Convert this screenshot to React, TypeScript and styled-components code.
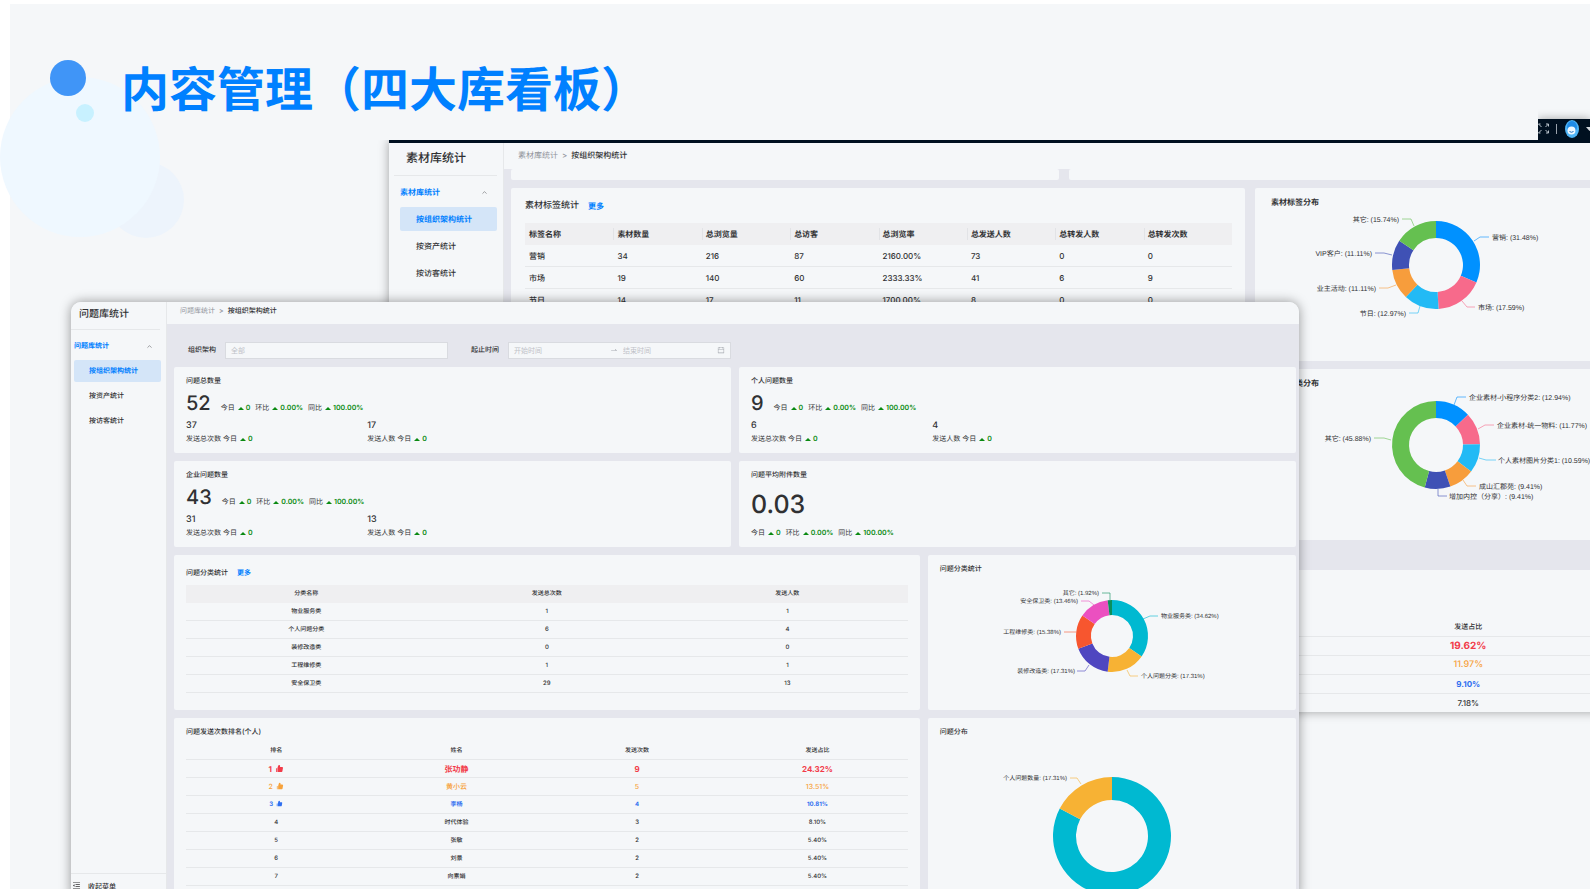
import React from "react";
import styled, { createGlobalStyle } from "styled-components";
import {
  AiFillLike,
  AiOutlineCalendar,
  AiOutlineMenuFold,
  AiOutlineSwapRight,
} from "react-icons/ai";
import { ChevronUp } from "lucide-react";

const color = {
  panel: "#f5f7f9",
  gutter: "#e5e6ed",
  line: "#e6e8ea",
  head: "#efeff1",
  text: "#303133",
  muted: "#909399",
  primary: "#0080ff",
  active: "#d4e5f8",
  up: "#0a8a12",
  navy: "#001020",
};

const GlobalStyle = createGlobalStyle`
  * { box-sizing: border-box; }
  body {
    margin: 0;
    background: #ffffff;
    color: ${color.text};
    font-family: Inter, "Noto Sans CJK SC", sans-serif;
    text-rendering: geometricPrecision;
    overflow: hidden;
  }
  h1, h2, p { margin: 0; font-weight: 500; }
  a { color: inherit; text-decoration: none; }
`;

/* ---------- slide ---------- */

const Slide = styled.div`
  position: relative;
  height: 100vh;
  overflow: hidden;
  padding: 4px 0 0 10px;
`;

const Sheet = styled.div`
  height: 100%;
  background: ${color.panel};
  padding: 54px 0 0 111px;
`;

const Bubbles = styled.svg`
  position: absolute;
  left: 0;
  top: 56px;
  width: 190px;
  height: 190px;
`;

const SlideTitle = styled.h1`
  position: relative;
  font-size: 48px;
  line-height: 64px;
  font-weight: 700;
  color: ${color.primary};
  white-space: nowrap;
`;

/* ---------- windows ---------- */

const BackWindow = styled.section`
  position: absolute;
  left: 389px;
  right: -35px;
  top: 140px;
  display: flex;
  border-top: 3px solid ${color.navy};
  background: ${color.panel};
  box-shadow: 0 0 10px rgba(0, 0, 0, 0.35);
  clip-path: inset(0 0 -24px -24px);
`;

const FrontWindow = styled.section`
  position: absolute;
  left: 71px;
  right: 291px;
  top: 302px;
  bottom: -8px;
  display: flex;
  overflow: hidden;
  border-radius: 10px 10px 0 0;
  background: ${color.panel};
`;

const FrontShadow = styled.div`
  position: absolute;
  left: 71px;
  right: 291px;
  top: 302px;
  bottom: -8px;
  border-radius: 10px 10px 0 0;
  box-shadow: 0 0 12px rgba(0, 0, 0, 0.4);
`;

const NavBar = styled.div`
  position: absolute;
  right: 0;
  top: 119px;
  width: 52px;
  height: 24px;
  background: ${color.navy};
  box-shadow: 0 0 10px rgba(0, 0, 0, 0.35);
  clip-path: inset(-12px 0 0 0);
`;

/* ---------- side menu ---------- */

const Side = styled.aside<{ $width: number }>`
  flex: none;
  width: ${(p) => p.$width}px;
  display: flex;
  flex-direction: column;
  border-right: 1px solid ${color.line};
`;

const SideTitle = styled.h2<{ $large?: boolean }>`
  margin: ${(p) => (p.$large ? "0 6px 0 5px" : "0 6px 0 0")};
  padding-left: ${(p) => (p.$large ? 12 : 8)}px;
  font-size: ${(p) => (p.$large ? 12 : 10)}px;
  line-height: ${(p) => (p.$large ? 30 : 24)}px;
  height: ${(p) => (p.$large ? 33 : 28)}px;
  border-bottom: 1px solid ${color.line};
`;

const Menu = styled.nav<{ $large?: boolean }>`
  display: flex;
  flex-direction: column;
  gap: 3px;
  padding: ${(p) => (p.$large ? "4px 6px 0 11px" : "5px 5px 0 3px")};
  font-size: ${(p) => (p.$large ? 8 : 7)}px;
  font-weight: 500;
`;

const MenuGroup = styled.div<{ $large?: boolean }>`
  display: flex;
  align-items: center;
  justify-content: space-between;
  height: ${(p) => (p.$large ? 24 : 22)}px;
  padding-right: ${(p) => (p.$large ? 9 : 8)}px;
  color: ${color.primary};
  font-weight: 700;
  svg { color: #606266; }
`;

const MenuItem = styled.a<{ $active?: boolean; $large?: boolean }>`
  height: ${(p) => (p.$large ? 24 : 22)}px;
  line-height: ${(p) => (p.$large ? 24 : 22)}px;
  padding-left: ${(p) => (p.$large ? 16 : 15)}px;
  border-radius: 2px;
  background: ${(p) => (p.$active ? color.active : "transparent")};
  color: ${(p) => (p.$active ? color.primary : color.text)};
  font-weight: ${(p) => (p.$active ? 700 : 500)};
`;

const Collapse = styled.button`
  display: flex;
  align-items: center;
  gap: 7px;
  height: 24px;
  margin-top: auto;
  padding: 0 0 0 1px;
  border: 0;
  border-top: 1px solid ${color.line};
  background: none;
  color: ${color.text};
  font: 500 7px Inter, "Noto Sans CJK SC", sans-serif;
`;

/* ---------- page parts ---------- */

const Main = styled.main`
  flex: 1;
  min-width: 0;
  display: flex;
  flex-direction: column;
`;

const Crumbs = styled.div<{ $large?: boolean }>`
  display: flex;
  gap: 4px;
  flex: none;
  height: ${(p) => (p.$large ? 26 : 22)}px;
  line-height: ${(p) => (p.$large ? 24 : 18)}px;
  padding-left: ${(p) => (p.$large ? 14 : 13)}px;
  font-size: ${(p) => (p.$large ? 8 : 7)}px;
  font-weight: 500;
  a { color: ${color.muted}; font-weight: 400; }
  span { color: ${color.muted}; }
`;

const Body = styled.div<{ $large?: boolean }>`
  flex: 1;
  display: flex;
  flex-direction: column;
  gap: 8px;
  padding: ${(p) => (p.$large ? "0 8px 0 7px" : "0 3px 0 7px")};
  background: ${color.gutter};
`;

const Row = styled.div<{ $cols: string; $gap?: number; $height?: number }>`
  display: grid;
  grid-template-columns: ${(p) => p.$cols};
  gap: ${(p) => p.$gap ?? 8}px;
  ${(p) => (p.$height ? `height: ${p.$height}px;` : "flex: 1; min-height: 0;")}
`;

const Card = styled.div<{ $pad?: string }>`
  min-width: 0;
  overflow: hidden;
  border-radius: 2px;
  background: ${color.panel};
  padding: ${(p) => p.$pad ?? "8px 12px 0"};
`;

const CardTitle = styled.h2<{ $size?: number; $bold?: boolean }>`
  display: flex;
  align-items: center;
  gap: 9px;
  font-size: ${(p) => p.$size ?? 7}px;
  line-height: 12px;
  font-weight: ${(p) => (p.$bold ? 700 : 500)};
  a { color: ${color.primary}; font-weight: 700; font-size: ${(p) => (p.$size ? 8 : 7)}px; }
`;

/* ---------- filters ---------- */

const Filters = styled.form`
  display: flex;
  align-items: center;
  gap: 23px;
  height: 35px;
  padding: 17px 0 0 14px;
`;

const Field = styled.div`
  display: flex;
  align-items: center;
  gap: 9px;
  font-size: 7px;
  font-weight: 500;
`;

const Box = styled.div`
  display: flex;
  align-items: center;
  width: 223px;
  height: 17px;
  padding: 0 5px;
  border: 1px solid #d9dbe0;
  background: ${color.panel};
  color: #a8abb2;
`;

const Input = styled.input<{ $grow?: boolean }>`
  flex: ${(p) => (p.$grow ? "1" : "none")};
  width: 96px;
  min-width: 0;
  padding: 0;
  border: 0;
  outline: 0;
  background: none;
  font: 400 7px Inter, "Noto Sans CJK SC", sans-serif;
  &::placeholder { color: #bfc2c8; opacity: 1; }
`;

const SmallIcon = styled.span<{ $gap?: number }>`
  display: flex;
  margin-right: ${(p) => p.$gap ?? 0}px;
`;

/* ---------- metrics ---------- */

const Headline = styled.div<{ $stacked?: boolean }>`
  display: flex;
  flex-direction: ${(p) => (p.$stacked ? "column" : "row")};
  align-items: baseline;
  gap: ${(p) => (p.$stacked ? 2 : 10)}px;
  padding-top: ${(p) => (p.$stacked ? 8 : 3)}px;
`;

const Figure = styled.strong<{ $size: number }>`
  font-size: ${(p) => p.$size}px;
  line-height: ${(p) => (p.$size > 22 ? 32 : 26)}px;
  font-weight: 500;
`;

const Trends = styled.div`
  display: flex;
  gap: 5px;
  font-size: 7px;
  line-height: 20px;
`;

const Trend = styled.span`
  display: inline-flex;
  align-items: center;
  gap: 3px;
  white-space: pre;
`;

const Rise = styled.b`
  display: inline-flex;
  align-items: center;
  gap: 2px;
  color: ${color.up};
  font-weight: 600;
  &::before {
    content: "";
    border: solid transparent;
    border-width: 0 3px 3px;
    border-bottom-color: ${color.up};
  }
`;

const SubMetrics = styled.div`
  display: grid;
  grid-template-columns: 34% 66%;
  padding-top: 2px;
  font-size: 7px;
  line-height: 14px;
  p { font-size: 9px; line-height: 12px; }
`;

/* ---------- tables ---------- */

const Table = styled.table<{ $row: number; $size: number; $left?: boolean; $top?: number }>`
  width: 100%;
  margin-top: ${(p) => p.$top ?? 0}px;
  table-layout: fixed;
  border-collapse: separate;
  border-spacing: 0;
  font-size: ${(p) => p.$size}px;
  line-height: 12px;
  text-align: ${(p) => (p.$left ? "left" : "center")};
  th, td {
    height: ${(p) => p.$row}px;
    padding: ${(p) => (p.$left ? "0 0 0 4px" : "0")};
    border-bottom: 1px solid ${color.line};
    font-weight: 500;
    white-space: nowrap;
  }
`;

const FilledHead = styled.thead<{ $height: number; $bold?: boolean }>`
  background: ${color.head};
  && th {
    height: ${(p) => p.$height}px;
    border-bottom: 0;
    font-weight: ${(p) => (p.$bold ? 700 : 500)};
  }
  && th + th {
    background: ${(p) =>
      p.$bold ? "linear-gradient(#e2e3e6, #e2e3e6) 0 50% / 1px 12px no-repeat" : "none"};
  }
`;

const medal = ["#f23c4a", "#f7a23b", "#2f6ff0"];

const RankRow = styled.tr<{ $rank: number; $base: number }>`
  && td {
    color: ${(p) => medal[p.$rank - 1] ?? color.text};
    font-size: ${(p) => Math.max(p.$base, p.$base + 3 - p.$rank)}px;
    font-weight: ${(p) => (p.$rank === 1 || p.$rank === 3 ? 700 : 500)};
  }
  svg { margin-left: 3px; vertical-align: -1px; }
`;

/* ---------- donut ---------- */

type Slice = {
  name: string;
  share: number;
  fill: string;
  line?: string;
  at?: [number, number];
};

const ChartBox = styled.div<{ $top: number }>`
  display: flex;
  justify-content: center;
  padding-top: ${(p) => p.$top}px;
  svg { flex: none; overflow: visible; }
  text {
    font-family: "Liberation Sans", "Noto Sans CJK SC", sans-serif;
    fill: ${color.text};
  }
`;

function Donut({ outer, inner, slices, font, top }: {
  outer: number; inner: number; slices: Slice[]; font: number; top: number;
}) {
  let from = 0;
  const point = (turn: number, r: number) =>
    `${(Math.sin(turn * 2 * Math.PI) * r).toFixed(2)} ${(-Math.cos(turn * 2 * Math.PI) * r).toFixed(2)}`;
  return (
    <ChartBox $top={top}>
      <svg width={outer * 2} height={outer * 2} viewBox={`${-outer} ${-outer} ${outer * 2} ${outer * 2}`}>
        {slices.map((s) => {
          const a = from;
          const b = from + s.share / 100;
          from = b;
          const big = b - a > 0.5 ? 1 : 0;
          return (
            <g key={s.name}>
              <path
                fill={s.fill}
                d={`M${point(a, outer)} A${outer} ${outer} 0 ${big} 1 ${point(b, outer)} L${point(b, inner)} A${inner} ${inner} 0 ${big} 0 ${point(a, inner)} Z`}
              />
              {s.line && <polyline points={s.line} fill="none" stroke={s.fill} strokeWidth={1} opacity={0.6} />}
              {s.at && (
                <text x={s.at[0]} y={s.at[1]} dy="0.36em" fontSize={font} textAnchor={s.at[0] > 0 ? "start" : "end"}>
                  {`${s.name}: (${s.share.toFixed(2)}%)`}
                </text>
              )}
            </g>
          );
        })}
      </svg>
    </ChartBox>
  );
}

const tagSlices: Slice[] = [
  { name: "营销", share: 31.48, fill: "#0091ff", line: "38,-24 44,-28 53,-28", at: [56, -28] },
  { name: "市场", share: 17.59, fill: "#f76a8b", line: "26,36 31,42 39,42", at: [42, 42] },
  { name: "节日", share: 12.97, fill: "#22baf5", line: "-16,41 -18,48 -27,48", at: [-30, 48] },
  { name: "业主活动", share: 11.11, fill: "#f79d3c", line: "-40,20 -48,23 -57,23", at: [-60, 23] },
  { name: "VIP客户", share: 11.11, fill: "#3f51b5", line: "-44,-10 -52,-12 -61,-12", at: [-64, -12] },
  { name: "其它", share: 15.74, fill: "#65c050", line: "-22,-39 -25,-46 -34,-46", at: [-37, -46] },
];

const materialSlices: Slice[] = [
  { name: "企业素材-小程序分类2", share: 12.94, fill: "#0091ff", line: "18,-40 21,-48 30,-48", at: [33, -48] },
  { name: "企业素材-统一物料", share: 11.77, fill: "#f76a8b", line: "42,-16 49,-20 58,-20", at: [61, -20] },
  { name: "个人素材图片分类1", share: 10.59, fill: "#22baf5", line: "43,13 50,15 60,15", at: [62, 15] },
  { name: "成山汇郡苑", share: 9.41, fill: "#f79d3c", line: "27,35 31,41 40,41", at: [43, 41] },
  { name: "增加内控（分享）", share: 9.41, fill: "#3f51b5", line: "2,44 2,51 11,51", at: [13, 51] },
  { name: "其它", share: 45.88, fill: "#65c050", line: "-45,-5 -52,-7 -62,-7", at: [-65, -7] },
];

const classSlices: Slice[] = [
  { name: "物业服务类", share: 34.62, fill: "#00b9d1", line: "31,-17 38,-20 46,-20", at: [49, -20] },
  { name: "个人问题分类", share: 17.31, fill: "#f7b234", line: "15,34 18,40 26,40", at: [29, 40] },
  { name: "装修改造类", share: 17.31, fill: "#4f46c0", line: "-23,29 -27,35 -35,35", at: [-37, 35] },
  { name: "工程维修类", share: 15.38, fill: "#f7562f", line: "-36,-4 -41,-4 -48,-4", at: [-51, -4] },
  { name: "安全保卫类", share: 13.46, fill: "#eb50c0", line: "-18,-31 -23,-35 -31,-35", at: [-34, -35] },
  { name: "其它", share: 1.92, fill: "#0a8f5b", line: "-2,-36 -2,-43 -10,-43", at: [-13, -43] },
];

const spreadSlices: Slice[] = [
  { name: "企业问题数量", share: 82.69, fill: "#00b9d1" },
  { name: "个人问题数量", share: 17.31, fill: "#f7b234", line: "-31,-52 -35,-58 -42,-58", at: [-45, -58] },
];

/* ---------- pieces ---------- */

function SideMenu({ title, large }: { title: string; large?: boolean }) {
  return (
    <>
      <SideTitle $large={large}>{title}</SideTitle>
      <Menu $large={large}>
        <MenuGroup $large={large}>
          {title}
          <ChevronUp size={7} />
        </MenuGroup>
        <MenuItem href="#org" $large={large} $active>按组织架构统计</MenuItem>
        <MenuItem href="#asset" $large={large}>按资产统计</MenuItem>
        <MenuItem href="#visitor" $large={large}>按访客统计</MenuItem>
      </Menu>
    </>
  );
}

function TrendLine() {
  return (
    <Trends>
      <Trend>今日<Rise>0</Rise></Trend>
      <Trend>环比<Rise>0.00%</Rise></Trend>
      <Trend>同比<Rise>100.00%</Rise></Trend>
    </Trends>
  );
}

function Metric({ title, total, sends, people }: {
  title: string; total: string; sends: number; people: number;
}) {
  return (
    <Card>
      <CardTitle>{title}</CardTitle>
      <Headline>
        <Figure $size={20}>{total}</Figure>
        <TrendLine />
      </Headline>
      <SubMetrics>
        <div>
          <p>{sends}</p>
          <Trend>发送总次数 今日<Rise>0</Rise></Trend>
        </div>
        <div>
          <p>{people}</p>
          <Trend>发送人数 今日<Rise>0</Rise></Trend>
        </div>
      </SubMetrics>
    </Card>
  );
}

const tagHead = ["标签名称", "素材数量", "总浏览量", "总访客", "总浏览率", "总发送人数", "总转发人数", "总转发次数"];
const tagRows = [
  ["营销", "34", "216", "87", "2160.00%", "73", "0", "0"],
  ["市场", "19", "140", "60", "2333.33%", "41", "6", "9"],
  ["节日", "14", "17", "11", "1700.00%", "8", "0", "0"],
];
const classRows = [
  ["物业服务类", "1", "1"],
  ["个人问题分类", "6", "4"],
  ["装修改造类", "0", "0"],
  ["工程维修类", "1", "1"],
  ["安全保卫类", "29", "13"],
];
const people = [
  ["张功静", "9", "24.32%"],
  ["黄小云", "5", "13.51%"],
  ["李杨", "4", "10.81%"],
  ["时代体验", "3", "8.10%"],
  ["张敏", "2", "5.40%"],
  ["刘景", "2", "5.40%"],
  ["向素娟", "2", "5.40%"],
];
const shares = ["19.62%", "11.97%", "9.10%", "7.18%"];

const WideChart = styled.div`
  padding-right: 16px;
`;

const SmallHead = styled.tr`
  font-size: 7px;
`;

const RankingCard = styled(Card)`
  margin-top: 22px;
  height: 142px;
`;

function MaterialWindow() {
  return (
    <BackWindow>
      <Side $width={115}>
        <SideMenu title="素材库统计" large />
      </Side>
      <Main>
        <Crumbs $large>
          <a href="#material">素材库统计</a><span>&gt;</span>按组织架构统计
        </Crumbs>
        <Body $large>
          <Row $cols="1fr 1fr" $gap={10} $height={11}>
            <Card />
            <Card />
          </Row>
          <Row $cols="734fr 362fr" $gap={10} $height={173}>
            <Card $pad="12px 13px 0 14px">
              <CardTitle $size={9}>素材标签统计<a href="#tags">更多</a></CardTitle>
              <Table $row={22} $size={8} $left $top={11}>
                <FilledHead $height={22} $bold>
                  <tr>{tagHead.map((h) => <th key={h}>{h}</th>)}</tr>
                </FilledHead>
                <tbody>
                  {tagRows.map((r) => (
                    <tr key={r[0]}>{r.map((c, i) => <td key={i}>{c}</td>)}</tr>
                  ))}
                </tbody>
              </Table>
            </Card>
            <Card $pad="8px 0 0 16px">
              <CardTitle $size={8} $bold>素材标签分布</CardTitle>
              <WideChart>
                <Donut outer={44} inner={27} slices={tagSlices} font={7} top={13} />
              </WideChart>
            </Card>
          </Row>
          <Row $cols="734fr 362fr" $gap={10} $height={171}>
            <Card />
            <Card $pad="8px 0 0 16px">
              <CardTitle $size={8} $bold>素材分类分布</CardTitle>
              <WideChart>
                <Donut outer={44} inner={27} slices={materialSlices} font={7} top={12} />
              </WideChart>
            </Card>
          </Row>
          <RankingCard $pad="48px 14px 0">
            <Table $row={19} $size={8}>
              <thead>
                <SmallHead><th colSpan={3} /><th>发送占比</th></SmallHead>
              </thead>
              <tbody>
                {shares.map((s, i) => (
                  <RankRow key={s} $rank={i + 1} $base={8}><td colSpan={3} /><td>{s}</td></RankRow>
                ))}
              </tbody>
            </Table>
          </RankingCard>
        </Body>
      </Main>
    </BackWindow>
  );
}

function QuestionWindow() {
  return (
    <>
      <FrontShadow />
      <FrontWindow>
        <Side $width={96}>
          <SideMenu title="问题库统计" />
          <Collapse type="button"><AiOutlineMenuFold size={9} />收起菜单</Collapse>
        </Side>
        <Main>
          <Crumbs>
            <a href="#question">问题库统计</a><span>&gt;</span>按组织架构统计
          </Crumbs>
          <Body>
            <Filters>
              <Field>
                <label htmlFor="org">组织架构</label>
                <Box><Input id="org" placeholder="全部" $grow /></Box>
              </Field>
              <Field>
                <label htmlFor="start">起止时间</label>
                <Box>
                  <Input id="start" placeholder="开始时间" />
                  <SmallIcon $gap={5}><AiOutlineSwapRight size={8} /></SmallIcon>
                  <Input id="end" aria-label="结束时间" placeholder="结束时间" $grow />
                  <SmallIcon><AiOutlineCalendar size={8} /></SmallIcon>
                </Box>
              </Field>
            </Filters>
            <Row $cols="1fr 1fr" $height={86}>
              <Metric title="问题总数量" total="52" sends={37} people={17} />
              <Metric title="个人问题数量" total="9" sends={6} people={4} />
            </Row>
            <Row $cols="1fr 1fr" $height={86}>
              <Metric title="企业问题数量" total="43" sends={31} people={13} />
              <Card>
                <CardTitle>问题平均附件数量</CardTitle>
                <Headline $stacked>
                  <Figure $size={25}>0.03</Figure>
                  <TrendLine />
                </Headline>
              </Card>
            </Row>
            <Row $cols="745fr 368fr" $height={155}>
              <Card $pad="12px 12px 0">
                <CardTitle>问题分类统计<a href="#classes">更多</a></CardTitle>
                <Table $row={18} $size={6} $top={6}>
                  <FilledHead $height={18}>
                    <tr><th>分类名称</th><th>发送总次数</th><th>发送人数</th></tr>
                  </FilledHead>
                  <tbody>
                    {classRows.map((r) => (
                      <tr key={r[0]}>{r.map((c, i) => <td key={i}>{c}</td>)}</tr>
                    ))}
                  </tbody>
                </Table>
              </Card>
              <Card>
                <CardTitle>问题分类统计</CardTitle>
                <Donut outer={36} inner={21} slices={classSlices} font={6} top={25} />
              </Card>
            </Row>
            <Row $cols="745fr 368fr">
              <Card>
                <CardTitle>问题发送次数排名(个人)</CardTitle>
                <Table $row={18} $size={6} $top={4}>
                  <thead>
                    <tr><th>排名</th><th>姓名</th><th>发送次数</th><th>发送占比</th></tr>
                  </thead>
                  <tbody>
                    {people.map(([name, count, share], i) => (
                      <RankRow key={name} $rank={i + 1} $base={6}>
                        <td>{i + 1}{i < 3 && <AiFillLike size={9 - i} />}</td>
                        <td>{name}</td>
                        <td>{count}</td>
                        <td>{share}</td>
                      </RankRow>
                    ))}
                  </tbody>
                </Table>
              </Card>
              <Card>
                <CardTitle>问题分布</CardTitle>
                <Donut outer={59} inner={36} slices={spreadSlices} font={6} top={39} />
              </Card>
            </Row>
          </Body>
        </Main>
      </FrontWindow>
    </>
  );
}

export default function App() {
  return (
    <Slide>
      <GlobalStyle />
      <Sheet>
        <Bubbles viewBox="0 0 190 190" aria-hidden="true">
          <circle cx="146" cy="144" r="38" fill="#edf4fc" />
          <circle cx="80" cy="101" r="80" fill="#eff8ff" />
          <circle cx="68" cy="22" r="18" fill="#4095f7" />
          <circle cx="85" cy="57" r="9" fill="#c8f1ff" />
        </Bubbles>
        <SlideTitle>内容管理（四大库看板）</SlideTitle>
      </Sheet>
      <NavBar>
        <svg width="52" height="24" viewBox="0 0 52 24" fill="none">
          <path
            d="M0.500 5l3 3M7.500 8l3-3M8 5h2.500v2.500M3.500 11l-3 3M7.500 11l3 3M8 14h2.500v-2.500M0.500 14h2M0.500 5h2"
            stroke="#b9c2cb"
          />
          <path d="M18.500 5v10" stroke="#9aa3ad" />
          <ellipse cx="34" cy="10" rx="7" ry="9" fill="#4fb4f5" />
          <ellipse cx="34" cy="8" rx="5" ry="6" fill="#1f8be6" />
          <ellipse cx="33.500" cy="11.500" rx="4" ry="4" fill="#eef8ff" />
          <path d="M31.500 12.500q2 1.500 4 0" stroke="#1f6fc0" />
          <path d="M48 8h7l-3.500 4z" fill="#d5dae0" />
        </svg>
      </NavBar>
      <MaterialWindow />
      <QuestionWindow />
    </Slide>
  );
}
